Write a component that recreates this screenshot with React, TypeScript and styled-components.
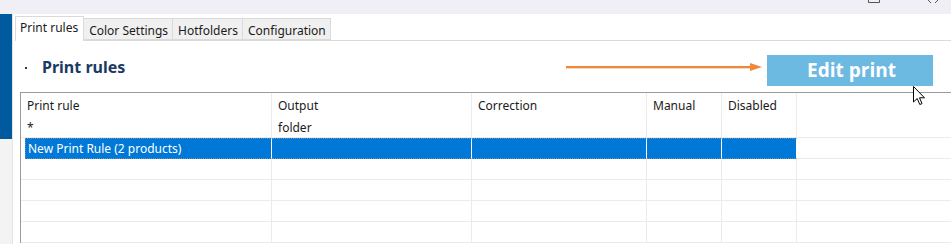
import React from "react";
import styled, { createGlobalStyle } from "styled-components";

const Global = createGlobalStyle`
    html, body { margin: 0; padding: 0; background: #ffffff; overflow: hidden; }
    body { font-family: "Noto Sans", "Open Sans", sans-serif; font-size: 12px; color: #1a1a1a; }
`;

const Window = styled.div`
    position: relative;
    width: 951px;
    height: 244px;
    display: flex;
    flex-direction: column;
    overflow: hidden;
`;

const TitleStrip = styled.div`
    height: 14px;
    flex: none;
    background: #f0eff5;
    display: flex;
    justify-content: flex-end;
    align-items: flex-start;
    gap: 46px;
    padding-right: 11px;
`;

const Body = styled.div`
    flex: 1;
    display: flex;
    min-height: 0;
`;

const Sidebar = styled.div`
    width: 12px;
    flex: none;
    background: #f3f3f3;
    border-right: 1px solid #e4e4e4;
    display: flex;
    flex-direction: column;
`;

const SideAccent = styled.div`
    height: 125px;
    background: #005a9e;
`;

const Main = styled.div`
    flex: 1;
    display: flex;
    flex-direction: column;
    padding-left: 2px;
    min-width: 0;
`;

const TabBar = styled.div`
    display: flex;
    align-items: flex-end;
    height: 25px;
    padding-top: 1px;
    border-bottom: 1px solid #dadada;
`;

const Tab = styled.div<{ $active?: boolean }>`
    height: ${(p) => (p.$active ? "25px" : "22px")};
    margin-bottom: ${(p) => (p.$active ? "-1px" : "0")};
    box-sizing: border-box;
    padding: ${(p) => (p.$active ? "2px 5px 0 4px" : "3px 4px 0 5px")};
    background: ${(p) => (p.$active ? "#ffffff" : "#f0f0f0")};
    border: 1px solid #dadada;
    border-bottom: ${(p) => (p.$active ? "none" : "1px solid #dadada")};
    border-left: ${(p) => (p.$active ? "1px solid #dadada" : "none")};
    font-size: 12px;
    color: #1a1a1a;
    white-space: nowrap;
`;

const SectionHead = styled.div`
    display: flex;
    align-items: center;
    height: 51px;
    padding-left: 10px;
`;

const Bullet = styled.span`
    width: 2px;
    height: 2px;
    background: #1b3a63;
    margin: 2px 15px 0 0;
`;

const Title = styled.h2`
    margin: 0;
    font-size: 16px;
    font-weight: 700;
    color: #1b3a63;
`;

const Spacer = styled.div`
    flex: 1;
`;

const Arrow = styled.svg`
    margin-right: 5px;
    margin-top: 1px;
`;

const EditButton = styled.button`
    width: 166px;
    height: 31px;
    margin-right: 18px;
    margin-top: 8px;
    border: none;
    background: #6cb9e2;
    color: #ffffff;
    font-family: "Open Sans", "Noto Sans", sans-serif;
    font-weight: 700;
    font-size: 19px;
    line-height: 31px;
    padding: 0 0 0 3px;
`;

const Table = styled.div`
    margin-left: 5px;
    border-top: 1px solid #9a9a9a;
    border-left: 1px solid #9a9a9a;
    display: grid;
    grid-template-columns: 251px 200px 175px 75px 75px 1fr;
`;

const HeadCell = styled.div<{ $last?: boolean }>`
    height: 24px;
    box-sizing: border-box;
    padding: 4px 0 0 6px;
    border-right: ${(p) => (p.$last ? "none" : "1px solid #ececec")};
    color: #1a1a1a;
    white-space: nowrap;
`;

const Cell = styled.div<{ $selected?: boolean; $first?: boolean; $fill?: boolean }>`
    height: 21px;
    box-sizing: border-box;
    padding: 2px 0 0 6px;
    border-bottom: 1px solid #ebebeb;
    border-right: ${(p) =>
        p.$fill ? "none" : p.$selected ? "1px solid #ffffff" : "1px solid #ebebeb"};
    background: ${(p) => (p.$selected ? "#0078d7" : "transparent")};
    color: ${(p) => (p.$selected ? "#ffffff" : "#1a1a1a")};
    white-space: nowrap;
    ${(p) =>
        p.$selected &&
        `
        border-top: 1px dotted #6d8fb3;
        border-bottom: 1px dotted #6d8fb3;
        padding-top: 1px;
    `}
    ${(p) => p.$selected && p.$first && `margin-left: 4px; padding-left: 2px; border-left: 1px dotted #6d8fb3;`}
`;

const Cursor = styled.svg`
    position: absolute;
    left: 913px;
    top: 86px;
`;

const Ctl = styled.svg`
    display: block;
`;

const columns = ["Print rule", "Output", "Correction", "Manual", "Disabled"];

const rows: { cells: string[]; selected?: boolean }[] = [
    { cells: ["*", "folder", "", "", ""] },
    { cells: ["New Print Rule (2 products)", "", "", "", ""], selected: true },
    { cells: ["", "", "", "", ""] },
    { cells: ["", "", "", "", ""] },
    { cells: ["", "", "", "", ""] },
    { cells: ["", "", "", "", ""] },
];

export default function App() {
    return (
        <Window>
            <Global />
            <TitleStrip>
                <Ctl width="12" height="4" viewBox="0 0 12 4">
                    <path d="M0.5 0 V2.5 H11.5 V0" fill="none" stroke="#555" strokeWidth="1" />
                </Ctl>
                <Ctl width="14" height="4" viewBox="0 0 14 4">
                    <path d="M2 0 L5 3 M12 0 L9 3" fill="none" stroke="#555" strokeWidth="1" />
                </Ctl>
            </TitleStrip>
            <Body>
                <Sidebar>
                    <SideAccent />
                </Sidebar>
                <Main>
                    <TabBar>
                        <Tab $active>Print rules</Tab>
                        <Tab>Color Settings</Tab>
                        <Tab>Hotfolders</Tab>
                        <Tab>Configuration</Tab>
                    </TabBar>
                    <SectionHead>
                        <Bullet />
                        <Title>Print rules</Title>
                        <Spacer />
                        <Arrow width="196" height="10" viewBox="0 0 196 10">
                            <line x1="0" y1="6" x2="186" y2="6" stroke="#e6b08a" strokeWidth="2" opacity="0.5" />
                            <line x1="0" y1="5" x2="186" y2="5" stroke="#f0873a" strokeWidth="2" />
                            <path d="M184 1 L196 5 L184 9 Z" fill="#f0873a" />
                        </Arrow>
                        <EditButton>Edit print</EditButton>
                    </SectionHead>
                    <Table>
                        {columns.map((c) => (
                            <HeadCell key={c}>{c}</HeadCell>
                        ))}
                        <HeadCell $last />
                        {rows.map((r, i) => (
                            <React.Fragment key={i}>
                                {r.cells.map((c, j) => (
                                    <Cell key={j} $selected={r.selected} $first={j === 0}>
                                        {c}
                                    </Cell>
                                ))}
                                <Cell $fill />
                            </React.Fragment>
                        ))}
                    </Table>
                </Main>
            </Body>
            <Cursor width="13" height="20" viewBox="0 0 13 20">
                <path
                    d="M0.5 0.5 L0.5 16 L4.2 12.5 L6.8 18.5 L9 17.6 L6.5 11.8 L11.5 11.8 Z"
                    fill="#ffffff"
                    stroke="#000000"
                    strokeWidth="1"
                    strokeLinejoin="miter"
                />
            </Cursor>
        </Window>
    );
}
